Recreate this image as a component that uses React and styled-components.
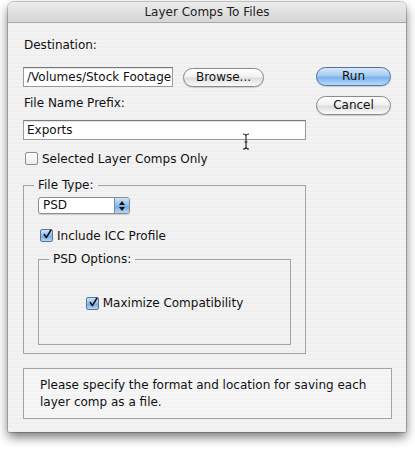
import React from 'react';
import styled, { createGlobalStyle } from 'styled-components';

const GlobalStyle = createGlobalStyle`
  html, body {
    margin: 0;
    padding: 0;
    background: #ffffff;
  }
  body {
    font-family: "DejaVu Sans", "Liberation Sans", sans-serif;
    font-size: 12px;
    color: #111;
  }
`;

function CheckMark() {
  return (
    <svg width="13" height="13" viewBox="0 0 13 13">
      <path
        d="M3 6.5 L5.6 10.5 L11.5 1"
        fill="none"
        stroke="#111"
        strokeWidth="2"
        strokeLinecap="round"
        strokeLinejoin="round"
      />
    </svg>
  );
}

function Stepper() {
  return (
    <svg width="8" height="12" viewBox="0 0 8 12">
      <path d="M4 1 L7 5 L1 5 Z" fill="#111" />
      <path d="M4 11 L7 7 L1 7 Z" fill="#111" />
    </svg>
  );
}

function IBeam() {
  return (
    <svg width="8" height="17" viewBox="0 0 8 17">
      <path
        d="M1 1 Q4 1 4 3 L4 14 Q4 16 1 16 M7 1 Q4 1 4 3 M4 14 Q4 16 7 16 M2.5 9 L5.5 9"
        fill="none"
        stroke="#222"
        strokeWidth="1.1"
      />
    </svg>
  );
}

export default function App() {
  return (
    <>
      <GlobalStyle />
      <Page>
        <Window>
          <TitleBar>Layer Comps To Files</TitleBar>
          <Content>
            <TopArea>
              <LeftColumn>
                <Label>Destination:</Label>
                <Row>
                  <TextField $width={150}>/Volumes/Stock Footage</TextField>
                  <Button $width={81}>Browse...</Button>
                </Row>
                <Label $top={8}>File Name Prefix:</Label>
                <TextField $width={283} $top={8}>
                  Exports
                  <Cursor>
                    <IBeam />
                  </Cursor>
                </TextField>
                <CheckRow $top={11}>
                  <CheckBox />
                  Selected Layer Comps Only
                </CheckRow>
              </LeftColumn>
              <ButtonColumn>
                <Button $width={75} $primary>Run</Button>
                <Button $width={75}>Cancel</Button>
              </ButtonColumn>
            </TopArea>

            <Group>
              <Legend>File Type:</Legend>
              <Popup>
                <PopupText>PSD</PopupText>
                <PopupArrows>
                  <Stepper />
                </PopupArrows>
              </Popup>
              <CheckRow $top={14}>
                <CheckBox $checked>
                  <CheckMark />
                </CheckBox>
                Include ICC Profile
              </CheckRow>
              <InnerGroup>
                <Legend>PSD Options:</Legend>
                <InnerBody>
                  <CheckRow $left={0}>
                    <CheckBox $checked>
                      <CheckMark />
                    </CheckBox>
                    Maximize Compatibility
                  </CheckRow>
                </InnerBody>
              </InnerGroup>
            </Group>

            <Message>
              Please specify the format and location for saving each layer
              comp as a file.
            </Message>
          </Content>
        </Window>
      </Page>
    </>
  );
}

const Page = styled.div`
  width: 415px;
  height: 450px;
  padding: 2px 9px 0 8px;
  box-sizing: border-box;
`;

const Window = styled.div`
  width: 398px;
  border-radius: 6px 6px 2px 2px;
  overflow: hidden;
  background: repeating-linear-gradient(
    to bottom,
    #efefef 0px,
    #efefef 2px,
    #f3f3f3 2px,
    #f3f3f3 4px
  );
  box-shadow: 0 5px 11px rgba(0, 0, 0, 0.55), 0 0 0 1px rgba(0, 0, 0, 0.18);
`;

const TitleBar = styled.div`
  height: 20px;
  line-height: 20px;
  text-align: center;
  color: #222;
  background: linear-gradient(to bottom, #ececec, #d6d6d6);
  border-bottom: 1px solid #a9a9a9;
`;

const Content = styled.div`
  padding: 14px 14px 13px 15px;
  display: flex;
  flex-direction: column;
`;

const TopArea = styled.div`
  display: flex;
  gap: 10px;
`;

const LeftColumn = styled.div`
  width: 283px;
  display: flex;
  flex-direction: column;
`;

const ButtonColumn = styled.div`
  padding-top: 30px;
  display: flex;
  flex-direction: column;
  gap: 10px;
`;

const Label = styled.div`
  margin-top: ${p => p.$top || 0}px;
  margin-left: 1px;
  height: 17px;
  line-height: 17px;
`;

const Row = styled.div`
  display: flex;
  align-items: center;
  gap: 10px;
  margin-top: 13px;
`;

const TextField = styled.div`
  position: relative;
  width: ${p => p.$width}px;
  height: 20px;
  box-sizing: border-box;
  margin-top: ${p => p.$top || 0}px;
  padding: 0 3px;
  line-height: 19px;
  background: #fff;
  border: 1px solid #9a9a9a;
  border-top-color: #7a7a7a;
  box-shadow: inset 0 1px 1px rgba(0, 0, 0, 0.12);
  white-space: nowrap;
`;

const Cursor = styled.span`
  position: absolute;
  left: 218px;
  top: 12px;
  line-height: 0;
  z-index: 1;
`;

const Button = styled.div`
  width: ${p => p.$width}px;
  height: 19px;
  box-sizing: border-box;
  border-radius: 10px;
  text-align: center;
  line-height: 17px;
  color: #111;
  border: 1px solid ${p => (p.$primary ? '#55739a' : '#8a8a8a')};
  background: ${p =>
    p.$primary
      ? 'linear-gradient(to bottom, #d6e8fb 0%, #a4cbf2 45%, #7ab3ec 55%, #b6dafb 100%)'
      : 'linear-gradient(to bottom, #ffffff 0%, #f1f1f1 45%, #dedede 55%, #fafafa 100%)'};
  box-shadow: 0 1px 1px rgba(0, 0, 0, 0.15);
`;

const CheckRow = styled.div`
  display: flex;
  align-items: center;
  gap: 4px;
  margin-top: ${p => p.$top || 0}px;
  margin-left: ${p => (p.$left === undefined ? 2 : p.$left)}px;
  height: 15px;
`;

const CheckBox = styled.span`
  width: 13px;
  height: 13px;
  box-sizing: border-box;
  border-radius: 2px;
  display: inline-flex;
  align-items: center;
  justify-content: center;
  border: 1px solid ${p => (p.$checked ? '#5b7598' : '#8c8c8c')};
  background: ${p =>
    p.$checked
      ? 'linear-gradient(to bottom, #cfe3f8, #8dbcec 50%, #6fa6e2 51%, #b5d6f6)'
      : 'linear-gradient(to bottom, #ffffff, #ececec)'};
  overflow: visible;
  svg {
    margin-top: -2px;
    margin-left: 1px;
  }
`;

const Group = styled.fieldset`
  width: 283px;
  box-sizing: border-box;
  margin: 12px 0 0 0;
  padding: 5px 14px 8px 14px;
  border: 1px solid #a3a3a3;
  min-width: 0;
`;

const InnerGroup = styled.fieldset`
  box-sizing: border-box;
  margin: 9px 0 0 0;
  padding: 0 14px;
  border: 1px solid #a3a3a3;
  min-width: 0;
`;

const InnerBody = styled.div`
  height: 78px;
  padding-bottom: 4px;
  box-sizing: border-box;
  display: flex;
  align-items: center;
  justify-content: center;
`;

const Legend = styled.legend`
  padding: 0 4px;
  margin-left: -4px;
  line-height: 14px;
`;

const Popup = styled.div`
  width: 92px;
  height: 17px;
  box-sizing: border-box;
  display: flex;
  border: 1px solid #8c8c8c;
  border-radius: 3px;
  background: #fff;
  overflow: hidden;
  box-shadow: 0 1px 1px rgba(0, 0, 0, 0.15);
`;

const PopupText = styled.div`
  flex: 1;
  padding-left: 4px;
  line-height: 15px;
`;

const PopupArrows = styled.div`
  width: 14px;
  display: flex;
  align-items: center;
  justify-content: center;
  border-left: 1px solid #6f8fb8;
  background: linear-gradient(to bottom, #cfe3f8, #8dbcec 50%, #6fa6e2 51%, #b5d6f6);
`;

const Message = styled.div`
  margin-top: 14px;
  width: 369px;
  box-sizing: border-box;
  border: 1px solid #a3a3a3;
  background: rgba(255, 255, 255, 0.25);
  padding: 8px 16px 7px 16px;
  line-height: 17px;
`;
